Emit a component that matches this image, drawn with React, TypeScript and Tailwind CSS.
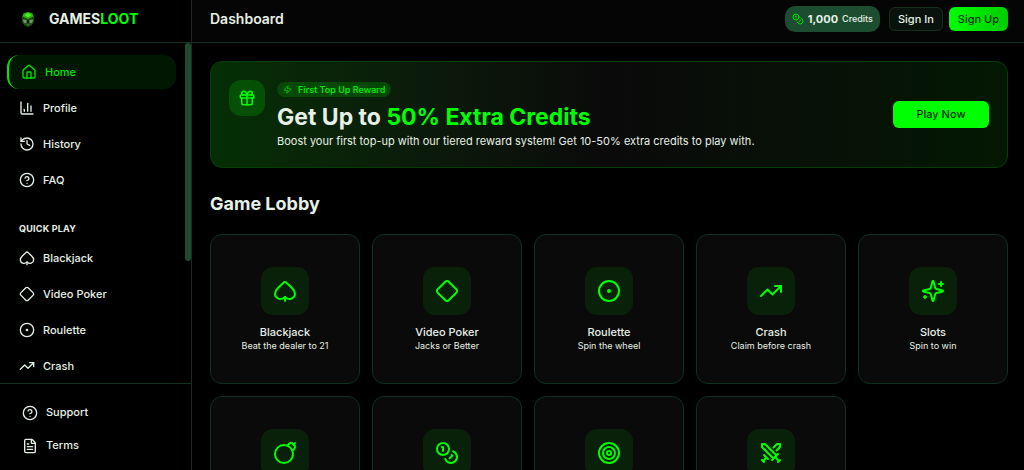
import type { ComponentType, ReactNode } from "react";
import {
  Bomb,
  ChartColumn,
  CircleDot,
  CircleQuestionMark,
  Coins,
  Diamond,
  FileText,
  Gift,
  History,
  House,
  Spade,
  Swords,
  Target,
  TrendingUp,
  Zap,
} from "lucide-react";

type Icon = ComponentType<{ className?: string }>;

function Sparkles({ className }: { className?: string }) {
  return (
    <svg
      className={className}
      viewBox="0 0 24 24"
      fill="none"
      stroke="currentColor"
      strokeWidth="2"
      strokeLinecap="round"
      strokeLinejoin="round"
      aria-hidden="true"
    >
      <path d="M9.937 15.5A2 2 0 0 0 8.5 14.063l-6.135-1.582a.5.5 0 0 1 0-.962L8.5 9.936A2 2 0 0 0 9.937 8.5l1.582-6.135a.5.5 0 0 1 .963 0L14.063 8.5A2 2 0 0 0 15.5 9.937l6.135 1.581a.5.5 0 0 1 0 .964L15.5 14.063a2 2 0 0 0-1.437 1.437l-1.582 6.135a.5.5 0 0 1-.963 0z" />
      <path d="M20 3v4M22 5h-4M4 17v2M5 18H3" />
    </svg>
  );
}

function Logo() {
  return (
    <svg className="size-5" viewBox="0 0 20 20" aria-hidden="true">
      <path d="M10 3 14.5 4.5 16 8v5l-2.5 3.5L10 18l-3.5-1.5L4 13V8l1.5-3.5Z" fill="#1b4a14" />
      <path d="M10 3 14.5 4.5 15.5 7.5 10 10 4.5 7.5 5.5 4.5Z" fill="#2fae12" />
      <path d="M10 4 13.5 6 10 8.5 6.5 6Z" fill="#45f51a" />
      <path d="M5 10.5 8.5 11v2.5L7 14.5 5.5 13ZM15 10.5 11.5 11v2.5l1.5 1L14.5 13Z" fill="#6f9a68" />
      <path d="M9 11h2v3H9Z" fill="#0b2407" />
      <path d="M8 15.5 10 14.5 12 15.5 10 17Z" fill="#2c7a1e" />
    </svg>
  );
}

const mainLinks: { label: string; icon: Icon; active?: boolean }[] = [
  { label: "Home", icon: House, active: true },
  { label: "Profile", icon: ChartColumn },
  { label: "History", icon: History },
  { label: "FAQ", icon: CircleQuestionMark },
];

const quickPlay: { label: string; icon: Icon }[] = [
  { label: "Blackjack", icon: Spade },
  { label: "Video Poker", icon: Diamond },
  { label: "Roulette", icon: CircleDot },
  { label: "Crash", icon: TrendingUp },
];

const footerLinks: { label: string; icon: Icon }[] = [
  { label: "Support", icon: CircleQuestionMark },
  { label: "Terms", icon: FileText },
];

const games: { name: string; tagline: string; icon: Icon }[] = [
  { name: "Blackjack", tagline: "Beat the dealer to 21", icon: Spade },
  { name: "Video Poker", tagline: "Jacks or Better", icon: Diamond },
  { name: "Roulette", tagline: "Spin the wheel", icon: CircleDot },
  { name: "Crash", tagline: "Claim before crash", icon: TrendingUp },
  { name: "Slots", tagline: "Spin to win", icon: Sparkles },
  { name: "Mines", tagline: "Avoid the mines", icon: Bomb },
  { name: "Coin Flip", tagline: "Heads or tails", icon: Coins },
  { name: "Plinko", tagline: "Drop the ball", icon: Target },
  { name: "Battles", tagline: "Fight for loot", icon: Swords },
];

function NavLink({ icon: Icon, active, children }: { icon: Icon; active?: boolean; children: ReactNode }) {
  return (
    <a
      href="#"
      aria-current={active ? "page" : undefined}
      className={
        active
          ? "flex h-[34px] shrink-0 items-center gap-2 rounded-xl border-l-2 border-[#00e600] bg-[#021702] px-3 text-[#00e600]"
          : "flex h-[34px] shrink-0 items-center gap-2 rounded-xl px-3"
      }
    >
      <Icon className="size-4" />
      {children}
    </a>
  );
}

function Sidebar() {
  return (
    <aside className="flex w-48 shrink-0 flex-col border-r border-[#12301f] bg-black text-[11px] font-medium">
      <div className="flex h-[43px] shrink-0 items-center gap-[11px] border-b border-[#12301f] px-[18px] pb-1">
        <Logo />
        <span className="text-sm font-bold">
          GAMES<span className="text-[#00ff00]">LOOT</span>
        </span>
      </div>

      <div className="flex min-h-0 flex-1">
        <nav className="flex flex-1 flex-col gap-[2px] overflow-y-auto py-3 pr-[9px] pl-[7px] [scrollbar-width:none]">
          {mainLinks.map((link) => (
            <NavLink key={link.label} icon={link.icon} active={link.active}>
              {link.label}
            </NavLink>
          ))}
          <h2 className="mt-5 px-3 py-1 text-[9px] leading-3 font-bold tracking-wide uppercase">Quick Play</h2>
          {quickPlay.map((link) => (
            <NavLink key={link.label} icon={link.icon}>
              {link.label}
            </NavLink>
          ))}
        </nav>
        <div className="w-1.5 shrink-0">
          <div className="h-[64%] rounded-full bg-[#1c4d30]" />
        </div>
      </div>

      <div className="shrink-0 border-t border-[#12301f] px-[22px] pt-3 pb-2">
        {footerLinks.map(({ label, icon: Icon }) => (
          <a key={label} href="#" className="flex h-[33px] items-center gap-2">
            <Icon className="size-4" />
            {label}
          </a>
        ))}
      </div>
    </aside>
  );
}

function Header() {
  return (
    <header className="flex h-[43px] shrink-0 items-center justify-between border-b border-[#12301f] bg-[#050505] pr-4 pb-1 pl-[18px]">
      <h1 className="text-sm font-semibold">Dashboard</h1>
      <div className="flex items-center gap-1.5">
        <div className="mr-[3px] flex h-[26px] items-center gap-1 rounded-[10px] bg-[#1c4d30] px-[7px] text-[11px] font-bold">
          <Coins className="size-3 text-[#00e600]" />
          1,000
          <span className="text-[9px] font-medium">Credits</span>
        </div>
        <button className="h-6 rounded-md border border-[#16301f] bg-[#0a120d] px-2 text-[11px] font-medium">
          Sign In
        </button>
        <button className="h-6 rounded-md bg-linear-to-r from-[#00ff00] to-[#00cc00] px-[9px] text-[11px] font-medium text-[#052e05]">
          Sign Up
        </button>
      </div>
    </header>
  );
}

function RewardBanner() {
  return (
    <section className="flex items-center justify-between rounded-xl border border-[#053f05] bg-linear-to-r from-[#042f04] via-[#0a0a0a] to-[#031803] p-[18px]">
      <div className="flex gap-3">
        <div className="flex size-9 items-center justify-center rounded-xl bg-[#065006] text-[#00ff00]">
          <Gift className="size-[18px]" />
        </div>
        <div className="pt-[2px]">
          <div className="flex h-[15px] w-fit items-center gap-1.5 rounded-full bg-[#064806] px-1.5 text-[9px] font-semibold text-[#00e600]">
            <Zap className="size-[9px]" />
            First Top Up Reward
          </div>
          <h2 className="mt-1 text-[23px] leading-8 font-bold">
            Get Up to <span className="text-[#00ff00]">50% Extra Credits</span>
          </h2>
          <p className="text-[11px] leading-4">
            Boost your first top-up with our tiered reward system! Get 10-50% extra credits to play with.
          </p>
        </div>
      </div>
      <button className="h-[27px] w-24 rounded-md bg-[#00ff00] text-[11px] font-medium text-[#052e05]">
        Play Now
      </button>
    </section>
  );
}

export default function App() {
  return (
    <div className="flex h-screen overflow-hidden bg-black font-[Inter,sans-serif] text-[#e6f0e6]">
      <Sidebar />
      <div className="flex min-w-0 flex-1 flex-col">
        <Header />
        <main className="min-h-0 flex-1 overflow-y-auto pt-[18px] pr-4 pb-4 pl-[18px] [scrollbar-width:none]">
          <RewardBanner />
          <h2 className="mt-6 text-lg leading-6 font-bold">Game Lobby</h2>
          <div className="mt-[18px] grid grid-cols-5 gap-3">
            {games.map(({ name, tagline, icon: Icon }) => (
              <a
                key={name}
                href="#"
                className="flex aspect-square flex-col items-center justify-center rounded-xl border border-[#12301f] bg-[#0a0a0a] text-center"
              >
                <div className="mb-[9px] flex size-12 items-center justify-center rounded-xl bg-[#092009] text-[#00ff00]">
                  <Icon className="size-6" />
                </div>
                <h3 className="text-[11px] leading-4 font-medium">{name}</h3>
                <p className="text-[9px] leading-3">{tagline}</p>
              </a>
            ))}
          </div>
        </main>
      </div>
    </div>
  );
}
